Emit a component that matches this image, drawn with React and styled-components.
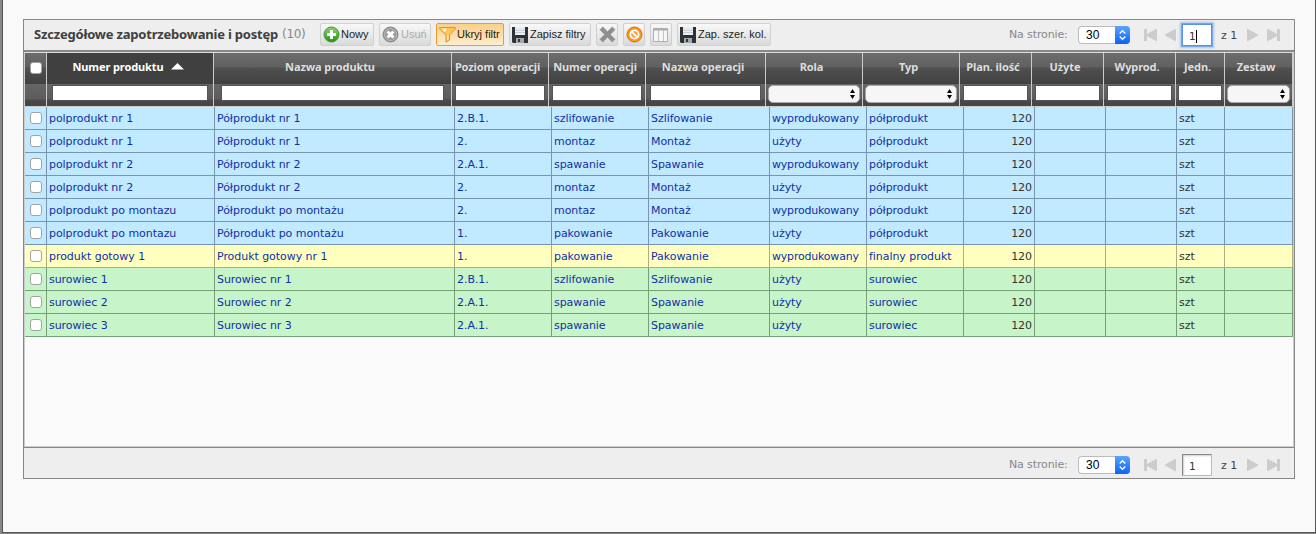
import React from "react";
import styled, { createGlobalStyle, css } from "styled-components";

const Global = createGlobalStyle`
  *, *::before, *::after { box-sizing: border-box; }
  html, body { margin: 0; padding: 0; }
  body { background: #888; font-family: "DejaVu Sans", sans-serif; font-size: 11px; overflow: hidden; }
`;

const Window = styled.div`
  box-sizing: content-box;
  width: 1292px;
  height: 513px;
  margin-left: 2px;
  padding: 19px 0 0 20px;
  border: solid #555;
  border-width: 0 1px 1px;
  background: #f9f9f9;
`;

const Panel = styled.section`
  display: flex;
  flex-direction: column;
  width: 1272px;
  height: 460px;
  border: 1px solid #888;
  background: #eee;
`;

const Toolbar = styled.header`
  display: flex;
  align-items: flex-start;
  height: 32px;
  padding: 3px 0 0 10px;
  border-bottom: 2px solid #888;
`;

const Title = styled.h1`
  width: 248px;
  margin: 0;
  font: bold 13px/22px "Noto Sans", sans-serif;
  letter-spacing: -0.2px;
  color: #404040;
  white-space: nowrap;
`;

const Count = styled.span`
  width: 38px;
  font-size: 12px;
  line-height: 22px;
  letter-spacing: -0.3px;
  color: #888;
`;

const Button = styled.button`
  display: flex;
  align-items: center;
  width: ${(p) => p.$width}px;
  height: 23px;
  margin: 0 5px 0 0;
  padding: 0 0 1px 2px;
  gap: ${(p) => p.$gap ?? 1}px;
  border: 1px solid #d0d0d0;
  border-radius: 2px;
  background: linear-gradient(#f8f8f8, #e9e9e9 50%, #dadada);
  font: 11px "Liberation Sans", sans-serif;
  color: ${(p) => (p.$disabled ? "#aaa" : "#222")};
  white-space: nowrap;
  svg { flex: none; display: block; margin-top: 1px; }
  ${(p) => p.$active && css`
    border-color: #f19a24;
    background: linear-gradient(#fbd08b, #fddda7 50%, #feedcf);
  `}
`;

const Pager = styled.div`
  display: flex;
  align-items: center;
  height: 24px;
  margin-left: auto;
  padding-right: 14px;
  color: #888;
  white-space: nowrap;
`;

const PagerLabel = styled.span`
  width: 69px;
  line-height: 16px;
  letter-spacing: -0.12px;
`;

const PageSize = styled.div`
  display: flex;
  width: 52px;
  height: 18px;
  margin-right: 14px;
  padding-left: 7px;
  justify-content: space-between;
  border: 1px solid #bbb;
  border-right: 0;
  border-radius: 4px;
  background: #fff;
  color: #000;
  font: 12px/16px "Liberation Sans", sans-serif;
  svg { display: block; margin: -1px 0; }
`;

const PageInput = styled.div`
  width: 30px;
  height: 22px;
  margin: 0 9px 0 5px;
  padding-left: 6px;
  border: 1px solid #888;
  border-right-color: #bbb;
  border-bottom-color: #bbb;
  background: #fff;
  box-shadow: inset 1px 1px 2px #ccc;
  color: #333;
  font-size: 10.5px;
  line-height: 22px;
  ${(p) => p.$focused && css`
    border-color: #5e93e0;
    box-shadow: 0 0 0 1px #78a7e8, 0 0 2px 2px #a9c6f0;
    &::after {
      content: "";
      display: inline-block;
      width: 1px;
      height: 13px;
      background: #000;
      vertical-align: -3px;
    }
  `}
`;

const PageTotal = styled.span`
  width: 25px;
  color: #444;
`;

const Arrow = styled.svg`
  display: block;
  margin-right: ${(p) => p.$gap || 0}px;
  fill: #ccc;
`;

const Grid = styled.div`
  flex: 1;
  border: 1px solid #ccc;
  border-top-color: #ddd;
  background: #fbfbfb;
`;

const HeadRow = styled.div`
  display: grid;
  grid-template-columns: 22px 167px 238px 97px 97px 120px 97px 97px 72px 72px 72px 49px 68px;
  height: 54px;
  border-bottom: 1px solid #ccc;
`;

const HeadCell = styled.div`
  display: flex;
  flex-direction: column;
  border-right: 1px solid #ccc;
  background: linear-gradient(#666, #5c5c5c 70%, #494949 71%, #464646) 0 31px / 100% 22px no-repeat,
    linear-gradient(#6c6c6c, #606060 14px, #505050 15px, #414141 31px);
`;

const HeadLabel = styled.div`
  display: flex;
  justify-content: center;
  align-items: center;
  gap: 7px;
  height: 31px;
  padding: 0 ${(p) => p.$shift}px 4px 0;
  font: bold 11px "Noto Sans", sans-serif;
  letter-spacing: -0.1px;
  color: ${(p) => (p.$sorted ? "#fff" : "#ddd")};
  background: ${(p) => (p.$sorted ? "#404040" : "none")};
  white-space: nowrap;
`;

const FilterInput = styled.div`
  height: 16px;
  margin: 1px ${(p) => p.$side}px 0;
  border: 1px solid #555;
  background: #fff;
`;

const FilterSelect = styled.div`
  display: flex;
  justify-content: flex-end;
  align-items: center;
  height: 18px;
  margin: 1px 2px 0;
  padding-right: 4px;
  border: 1px solid #a6a6a6;
  border-radius: 5px;
  background: #f6f6f6;
`;

const Check = styled.span`
  display: block;
  width: 12px;
  height: 12px;
  margin: ${(p) => (p.$head ? "9px 0 0 5px" : "5px 0 0 5px")};
  border: 1px solid #a2a2a2;
  border-radius: 3px;
  background: #fff;
`;

const rowColors = {
  blue: ["#c1e9ff", "#7596ae"],
  yellow: ["#ffffbf", "#aeae7c"],
  green: ["#c7f4c8", "#76a078"],
};

const Row = styled.div`
  display: grid;
  grid-template-columns: 22px 168px 240px 97px 97px 121px 97px 97px 71px 71px 71px 48px 68px;
  grid-template-rows: 23px;
  height: 23px;
  background: ${(p) => rowColors[p.$tone][0]};
  > * {
    border: solid ${(p) => rowColors[p.$tone][1]};
    border-width: 0 1px 1px 0;
  }
`;

const Cell = styled.div`
  padding: 1px 2px 0;
  line-height: 22px;
  letter-spacing: ${(p) => (p.$tight ? "-0.2px" : "-0.05px")};
  text-align: ${(p) => (p.$right ? "right" : "left")};
  color: ${(p) => (p.$plain ? "#333" : "#1030a8")};
  white-space: nowrap;
`;

const Footer = styled.footer`
  display: flex;
  height: 31px;
  padding-top: 5px;
  border-top: 1px solid #888;
`;

const AddIcon = () => (
  <svg width="17" height="17" viewBox="0 0 17 17">
    <defs><linearGradient id="add" x2="0" y2="1"><stop stopColor="#8bd36c" /><stop offset="1" stopColor="#239512" /></linearGradient></defs>
    <circle cx="8.500" cy="8.500" r="7.500" fill="url(#add)" stroke="#3d9b29" />
    <path d="M8.500 4v9M4 8.500h9" stroke="#fff" strokeWidth="3" />
  </svg>
);
const DeleteIcon = () => (
  <svg width="17" height="17" viewBox="0 0 17 17">
    <circle cx="8.500" cy="8.500" r="7.500" fill="#989898" stroke="#858585" />
    <circle cx="8.500" cy="8.500" r="6" fill="none" stroke="#bbb" />
    <path d="M5.500 5.500l6 6M11.500 5.500l-6 6" stroke="#fff" strokeWidth="3" />
  </svg>
);
const FunnelIcon = () => (
  <svg width="17" height="17" viewBox="0 0 17 17">
    <path d="M.7 1.500h15.600v1.500L10.500 9v5L7 16.200V9L.7 3z" fill="#f7c75a" stroke="#c99a4a" />
    <path d="M2 2.500h6L6 6.500z" fill="#ffedb8" />
    <path d="M8 9h1.500v4.500L8 14.500z" fill="#ffe9b0" />
  </svg>
);
const SaveIcon = () => (
  <svg width="16" height="16" viewBox="0 0 16 16">
    <path d="M0 0h16v16H1L0 15z" fill="#2e3138" />
    <path d="M3 0h10v8H3z" fill="#e9eef3" />
    <path d="M3 3h10M3 5.500h10" stroke="#c6ced6" />
    <path d="M4 11h8v5H4z" fill="#a5a8ab" />
    <path d="M6 12h2v3H6z" fill="#34373c" />
  </svg>
);
const ClearIcon = () => (
  <svg width="17" height="17" viewBox="0 0 17 17">
    <path d="M.8 3.800L3.800.8l4.700 4.700L13.200.8l3 3-4.700 4.700 4.700 4.700-3 3-4.700-4.700-4.700 4.700-3-3 4.700-4.700z" fill="#8f8f8f" stroke="#aaa" strokeWidth=".7" />
  </svg>
);
const BlockIcon = () => (
  <svg width="17" height="17" viewBox="0 0 17 17">
    <circle cx="8.500" cy="8.500" r="7.500" fill="#f59a1c" stroke="#dc6f10" />
    <circle cx="8.500" cy="8.500" r="4.200" fill="#f5a33d" stroke="#fff" strokeWidth="1.700" />
    <path d="M5.700 5.700l5.600 5.600" stroke="#fff" strokeWidth="1.700" />
  </svg>
);
const ColumnsIcon = () => (
  <svg width="15" height="14" viewBox="0 0 15 14">
    <path d="M.5.5h14v13H.5z" fill="#f5f5f5" stroke="#b0b0b0" />
    <path d="M1 1.500h13" stroke="#aaa" strokeWidth="2" />
    <path d="M5.500 2v11M10.500 2v11" stroke="#c2c2c2" />
  </svg>
);

const Steppers = () => (
  <svg width="15" height="18" viewBox="0 0 15 18">
    <defs><linearGradient id="step" x2="0" y2="1"><stop stopColor="#5ba5fb" /><stop offset="1" stopColor="#0c62f8" /></linearGradient></defs>
    <path d="M0 0h11q4 0 4 4v10q0 4-4 4H0z" fill="url(#step)" />
    <path d="M4.700 7.500L7.500 4.700 10.300 7.500M4.700 10.500l2.800 2.800 2.800-2.800" fill="none" stroke="#fff" strokeWidth="1.300" />
  </svg>
);

function Paging({ focused }) {
  return (
    <Pager>
      <PagerLabel>Na stronie:</PagerLabel>
      <PageSize>30<Steppers /></PageSize>
      <Arrow width="13" height="12" $gap={8}><path d="M0 0h3v5l9-5h1v12h-1L3 7v5H0z" /></Arrow>
      <Arrow width="12" height="12"><path d="M11 0v12h-1L0 6.500v-1L10 0z" /></Arrow>
      <PageInput $focused={focused}>1</PageInput>
      <PageTotal>z 1</PageTotal>
      <Arrow width="12" height="12" $gap={9}><path d="M1 0v12h1l10-5.500v-1L2 0z" /></Arrow>
      <Arrow width="13" height="12"><path d="M0 0h1l9 5V0h3v12h-3V7l-9 5H0z" /></Arrow>
    </Pager>
  );
}

const columns = [
  { name: "Numer produktu", side: 5, shift: 4 },
  { name: "Nazwa produktu", side: 7, shift: 5 },
  { name: "Poziom operacji", side: 3, shift: 5 },
  { name: "Numer operacji", side: 3, shift: 4 },
  { name: "Nazwa operacji", side: 4, shift: 5 },
  { name: "Rola", shift: 5 },
  { name: "Typ", shift: 5 },
  { name: "Plan. ilość", side: 3, shift: 5 },
  { name: "Użyte", side: 3, shift: 5 },
  { name: "Wyprod.", side: 3, shift: 5 },
  { name: "Jedn.", side: 2, shift: 5 },
  { name: "Zestaw", shift: 5 },
];

const made = "wyprodukowany";
const used = "użyty";
const rows = [
  ["blue", "polprodukt nr 1", "Półprodukt nr 1", "2.B.1.", "szlifowanie", "Szlifowanie", made, "półprodukt"],
  ["blue", "polprodukt nr 1", "Półprodukt nr 1", "2.", "montaz", "Montaż", used, "półprodukt"],
  ["blue", "polprodukt nr 2", "Półprodukt nr 2", "2.A.1.", "spawanie", "Spawanie", made, "półprodukt"],
  ["blue", "polprodukt nr 2", "Półprodukt nr 2", "2.", "montaz", "Montaż", used, "półprodukt"],
  ["blue", "polprodukt po montazu", "Półprodukt po montażu", "2.", "montaz", "Montaż", made, "półprodukt"],
  ["blue", "polprodukt po montazu", "Półprodukt po montażu", "1.", "pakowanie", "Pakowanie", used, "półprodukt"],
  ["yellow", "produkt gotowy 1", "Produkt gotowy nr 1", "1.", "pakowanie", "Pakowanie", made, "finalny produkt"],
  ["green", "surowiec 1", "Surowiec nr 1", "2.B.1.", "szlifowanie", "Szlifowanie", used, "surowiec"],
  ["green", "surowiec 2", "Surowiec nr 2", "2.A.1.", "spawanie", "Spawanie", used, "surowiec"],
  ["green", "surowiec 3", "Surowiec nr 3", "2.A.1.", "spawanie", "Spawanie", used, "surowiec"],
];

export default function App() {
  return (
    <>
      <Global />
      <Window>
        <Panel>
          <Toolbar>
            <Title>Szczegółowe zapotrzebowanie i postęp</Title>
            <Count>(10)</Count>
            <Button $width={54}><AddIcon />Nowy</Button>
            <Button $width={52} $disabled $gap={2}><DeleteIcon />Usuń</Button>
            <Button $width={68} $active><FunnelIcon />Ukryj filtr</Button>
            <Button $width={82} $gap={2}><SaveIcon />Zapisz filtry</Button>
            <Button $width={22}><ClearIcon /></Button>
            <Button $width={22}><BlockIcon /></Button>
            <Button $width={22}><ColumnsIcon /></Button>
            <Button $width={94} $gap={2}><SaveIcon />Zap. szer. kol.</Button>
            <Paging focused />
          </Toolbar>
          <Grid>
            <HeadRow>
              <HeadCell><Check $head /></HeadCell>
              {columns.map(({ name, side, shift }, i) => (
                <HeadCell key={name}>
                  <HeadLabel $sorted={i === 0} $shift={shift}>
                    {name}
                    {i === 0 && <svg width="13" height="7"><path d="M0 6.500L6.500 0 13 6.500z" fill="#fff" /></svg>}
                  </HeadLabel>
                  {side ? <FilterInput $side={side} /> : (
                    <FilterSelect><svg width="5" height="10"><path d="M0 4L2.500 0 5 4zM0 6l2.500 4L5 6z" /></svg></FilterSelect>
                  )}
                </HeadCell>
              ))}
            </HeadRow>
            {rows.map(([tone, ...cells], i) => (
              <Row key={i} $tone={tone}>
                <div><Check /></div>
                {cells.map((text, j) => <Cell key={j} $tight={text === made}>{text}</Cell>)}
                <Cell $plain $right>120</Cell>
                <Cell />
                <Cell />
                <Cell $plain>szt</Cell>
                <Cell />
              </Row>
            ))}
          </Grid>
          <Footer><Paging /></Footer>
        </Panel>
      </Window>
    </>
  );
}
